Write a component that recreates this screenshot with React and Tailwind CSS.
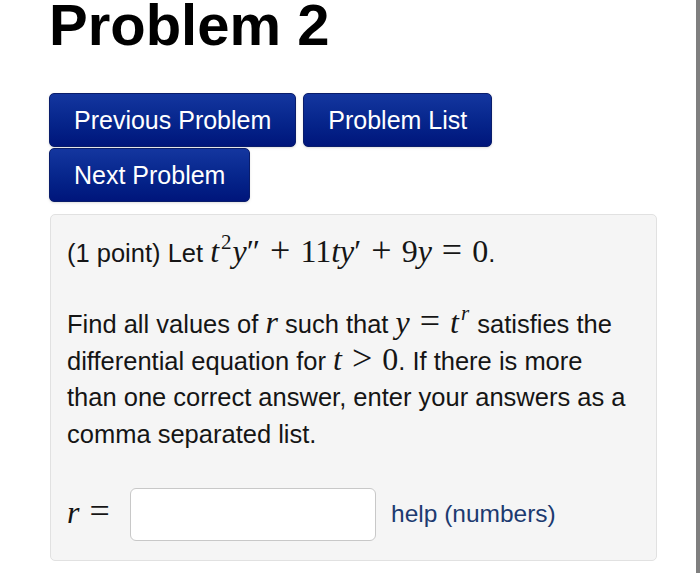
const serif = '"Liberation Serif", "DejaVu Serif", serif';

function M({ children }) {
  return <span className="italic text-[32px] leading-[0]" style={{ fontFamily: serif }}>{children}</span>;
}

function N({ children }) {
  return <span className="text-[32px] leading-[0]" style={{ fontFamily: serif }}>{children}</span>;
}

function Sup({ children, italic }) {
  return (
    <span className={`relative -top-[13px] ml-[2px] mr-[1px] text-[21px] leading-[0] ${italic ? "italic" : ""}`} style={{ fontFamily: serif }}>
      {children}
    </span>
  );
}

function Op({ children }) {
  return <span className="mx-[10px] text-[36px] leading-[0]" style={{ fontFamily: serif }}>{children}</span>;
}

function NavButton({ children }) {
  return (
    <button className="h-[54px] px-6 rounded-[5px] border border-[#0a1d6b] bg-gradient-to-b from-[#14369f] to-[#00157b] text-white text-[25px] leading-none shadow-sm">
      {children}
    </button>
  );
}

export default function App() {
  return (
    <div className="flex h-[573px] bg-white text-black" style={{ fontFamily: '"Liberation Sans", Arial, sans-serif' }}>
      <main className="flex-1 pl-[49px]">
        <h1 className="text-[58px] font-bold leading-[49px]">Problem 2</h1>

        <div className="mt-[44px] flex flex-wrap gap-x-[7px] gap-y-[1px] w-[460px]">
          <NavButton>Previous Problem</NavButton>
          <NavButton>Problem List</NavButton>
          <NavButton>Next Problem</NavButton>
        </div>

        <section className="mt-[12px] ml-[1px] w-[607px] rounded-[5px] border border-[#e1e1e1] bg-[#f5f5f5] pl-[16px] pr-[10px] pt-[19px] pb-[19px] text-[25.5px] text-[#151515]">
          <p className="leading-[38px] whitespace-nowrap">
            (1 point) Let <M>t</M><Sup>2</Sup><M>y</M><N>″</N>
            <Op>+</Op><N>11</N><M>ty</M><N>′</N><Op>+</Op><N>9</N><M>y</M><Op>=</Op><N>0</N>.
          </p>

          <p className="mt-[34px] leading-[36.5px] whitespace-nowrap">
            Find all values of <M>r</M> such that <M>y</M><Op>=</Op><M>t</M><Sup italic>r</Sup> satisfies the
            <br />
            differential equation for <M>t</M><Op>&gt;</Op><N>0</N>. If there is more
            <br />
            than one correct answer, enter your answers as a
            <br />
            comma separated list.
          </p>

          <div className="mt-[36px] flex items-center">
            <span className="w-[63px] whitespace-nowrap leading-[53px]">
              <M>r</M><Op>=</Op>
            </span>
            <input
              type="text"
              className="h-[53px] w-[246px] rounded-[6px] border border-[#c8c8c8] bg-white outline-none"
            />
            <a className="ml-[15px] text-[24.5px] text-[#1c3a70]">help (numbers)</a>
          </div>
        </section>
      </main>
      <div className="w-[4px] bg-[#7f7f7f]" />
    </div>
  );
}
